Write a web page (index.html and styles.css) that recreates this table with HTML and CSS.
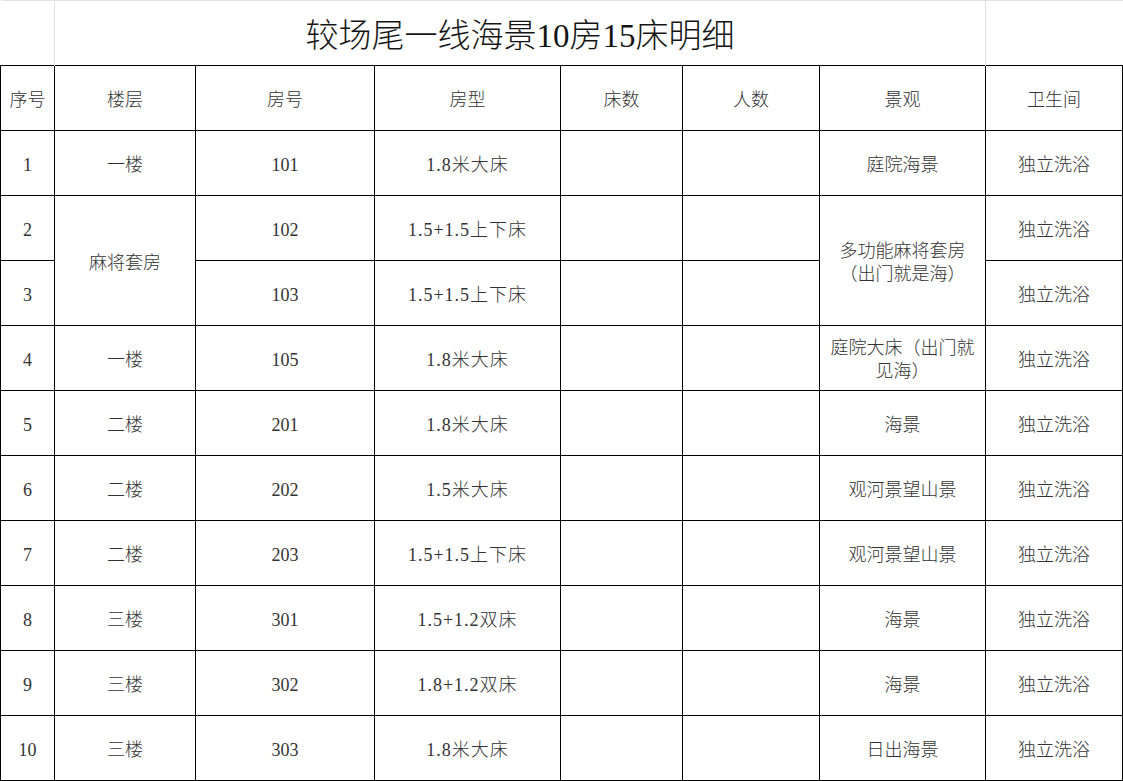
FILE: index.html
```html
<!DOCTYPE html>
<html lang="zh">
<head>
<meta charset="utf-8">
<title>较场尾一线海景10房15床明细</title>
<link rel="stylesheet" href="styles.css">
</head>
<body>
<table class="sheet">
  <colgroup>
    <col class="c1"><col class="c2"><col class="c3"><col class="c4"><col class="c5"><col class="c6"><col class="c7"><col class="c8">
  </colgroup>
  <tr class="title-row">
    <td class="grid-cell"></td>
    <td class="title" colspan="6">较场尾一线海景10房15床明细</td>
    <td class="grid-cell grid-left"></td>
  </tr>
  <tr class="row head">
    <td>序号</td><td>楼层</td><td>房号</td><td>房型</td><td>床数</td><td>人数</td><td>景观</td><td>卫生间</td>
  </tr>
  <tr class="row">
    <td>1</td><td>一楼</td><td>101</td><td class="rt">1.8米大床</td><td></td><td></td><td>庭院海景</td><td>独立洗浴</td>
  </tr>
  <tr class="row">
    <td>2</td><td rowspan="2">麻将套房</td><td>102</td><td class="rt">1.5+1.5上下床</td><td></td><td></td><td rowspan="2" class="wrap">多功能麻将套房<br>（出门就是海）</td><td>独立洗浴</td>
  </tr>
  <tr class="row">
    <td>3</td><td>103</td><td class="rt">1.5+1.5上下床</td><td></td><td></td><td>独立洗浴</td>
  </tr>
  <tr class="row">
    <td>4</td><td>一楼</td><td>105</td><td class="rt">1.8米大床</td><td></td><td></td><td class="wrap">庭院大床（出门就<br>见海）</td><td>独立洗浴</td>
  </tr>
  <tr class="row">
    <td>5</td><td>二楼</td><td>201</td><td class="rt">1.8米大床</td><td></td><td></td><td>海景</td><td>独立洗浴</td>
  </tr>
  <tr class="row">
    <td>6</td><td>二楼</td><td>202</td><td class="rt">1.5米大床</td><td></td><td></td><td>观河景望山景</td><td>独立洗浴</td>
  </tr>
  <tr class="row">
    <td>7</td><td>二楼</td><td>203</td><td class="rt">1.5+1.5上下床</td><td></td><td></td><td>观河景望山景</td><td>独立洗浴</td>
  </tr>
  <tr class="row">
    <td>8</td><td>三楼</td><td>301</td><td class="rt">1.5+1.2双床</td><td></td><td></td><td>海景</td><td>独立洗浴</td>
  </tr>
  <tr class="row">
    <td>9</td><td>三楼</td><td>302</td><td class="rt">1.8+1.2双床</td><td></td><td></td><td>海景</td><td>独立洗浴</td>
  </tr>
  <tr class="row">
    <td>10</td><td>三楼</td><td>303</td><td class="rt">1.8米大床</td><td></td><td></td><td>日出海景</td><td>独立洗浴</td>
  </tr>
</table>
</body>
</html>
```
FILE: styles.css
```css
html, body {
  margin: 0;
  padding: 0;
  background: #ffffff;
}
body {
  font-family: "Liberation Serif", "Noto Sans CJK SC", serif;
  color: #333333;
}
.sheet {
  border-collapse: collapse;
  table-layout: fixed;
  width: 1122px;
}
.c1 { width: 54px; }
.c2 { width: 141px; }
.c3 { width: 179px; }
.c4 { width: 186px; }
.c5 { width: 122px; }
.c6 { width: 137px; }
.c7 { width: 166px; }
.c8 { width: 137px; }

.title-row td {
  height: 65px;
  padding: 0;
  border-top: 1px solid #e2e2e2;
  box-sizing: border-box;
}
.title {
  font-size: 33px;
  font-weight: 300;
  color: #141414;
  text-align: center;
  vertical-align: middle;
  padding-top: 4px;
  border-left: 1px solid #dedede;
  border-right: 1px solid #dedede;
}
.row td {
  border: 1px solid #000;
  height: 65px;
  padding: 4px 0 0 0;
  text-align: center;
  vertical-align: middle;
  font-size: 18px;
  font-weight: 300;
  line-height: 22px;
  box-sizing: border-box;
}
.row td.rt {
  letter-spacing: 1px;
}
.row td.wrap {
  line-height: 23px;
}
```
